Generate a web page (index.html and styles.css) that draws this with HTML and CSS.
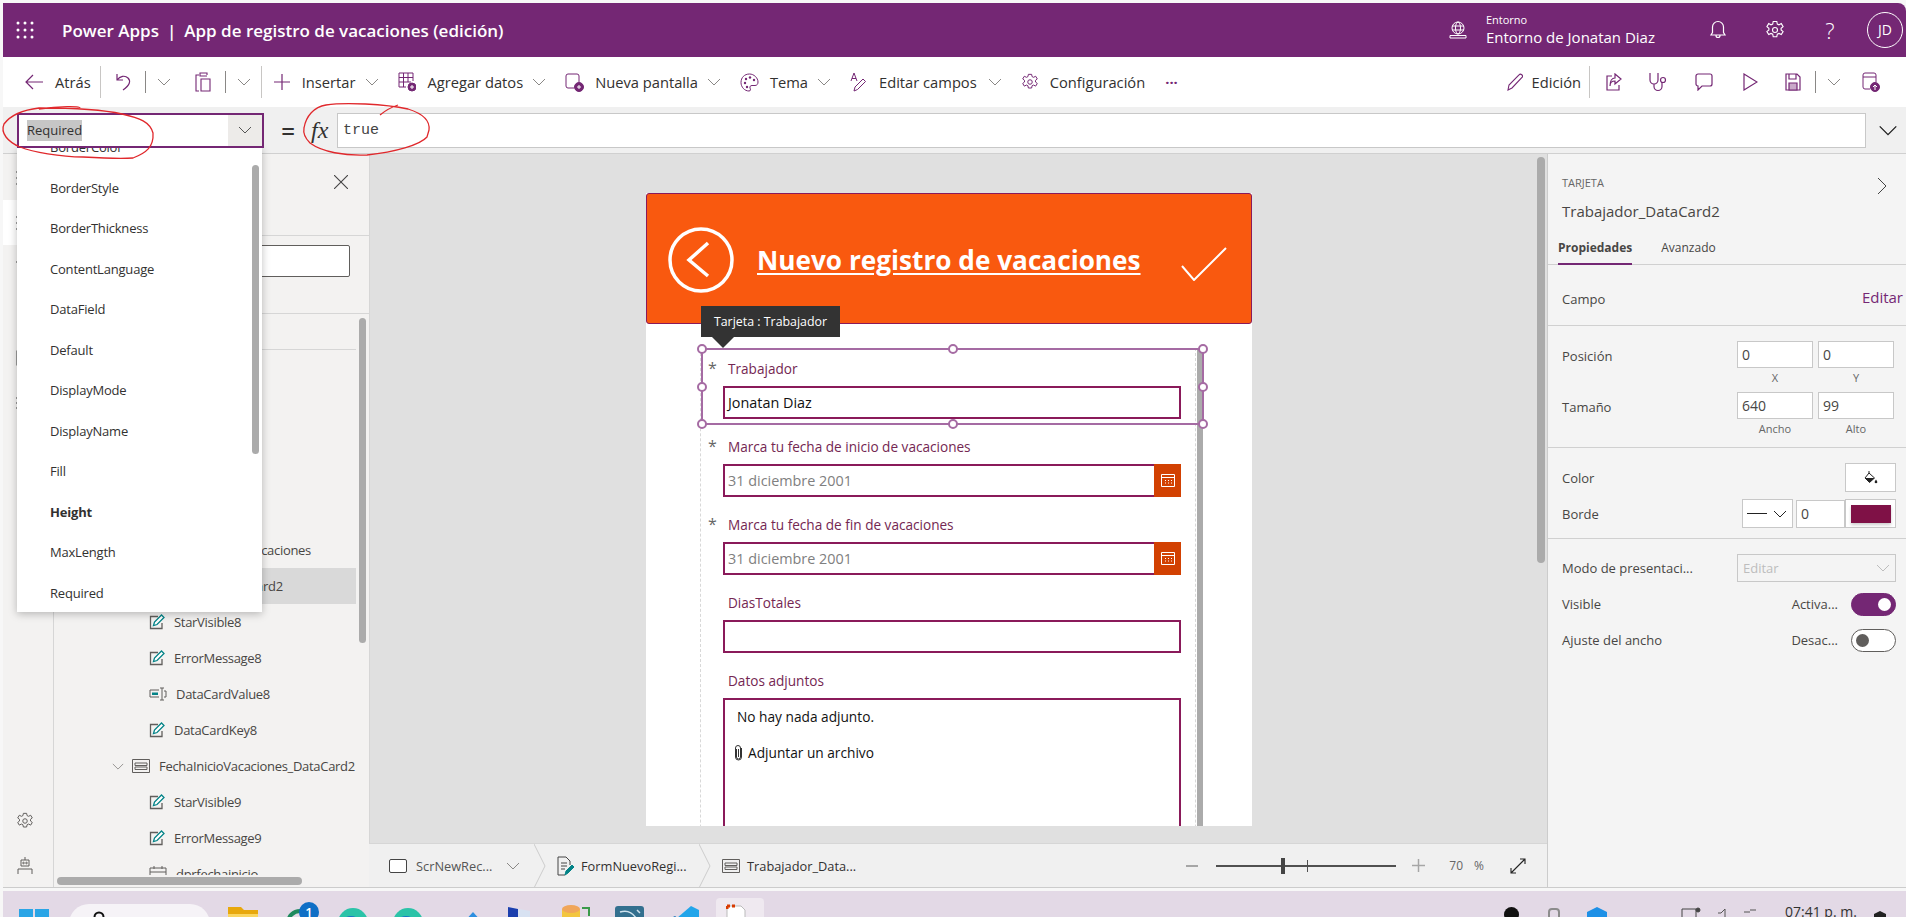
FILE: index.html
```html
<!DOCTYPE html>
<html lang="es">
<head>
    <meta charset="UTF-8">
    <title>Power Apps - App de registro de vacaciones</title>
    <link rel="stylesheet" href="styles.css">
</head>
<body>
    <!-- shared icons -->
    <svg class="defs" width="0" height="0">
        <symbol id="chev" viewBox="0 0 14 8"><path d="M1 1l6 6 6-6" fill="none" stroke="currentColor"/></symbol>
        <symbol id="edit" viewBox="0 0 16 16">
            <path d="M13 9v5.500H1.500V2.500H9" fill="none" stroke="#605e5c" stroke-width="1.300"/>
            <path d="M4.500 11.500l1-3.500 7-7 2.500 2.500-7 7z" fill="#fff" stroke="#038387" stroke-width="1.300"/>
        </symbol>
        <symbol id="card" viewBox="0 0 18 14">
            <path d="M.5.500h17v13H.5zM3 4h12v2.500H3zM3 8h12v2.500H3z" fill="none" stroke="#605e5c"/>
        </symbol>
        <symbol id="gear" viewBox="0 0 20 20">
            <path d="M8.200 1.500h3.600l.5 2.500 1.700.8 2.300-1.200 1.800 3-2 1.600v1.800l2 1.600-1.800 3-2.300-1.200-1.700.8-.5 2.500H8.200l-.5-2.500-1.700-.8-2.300 1.200-1.800-3 2-1.600V8.200l-2-1.600 1.800-3L6 4.800l1.700-.8z" fill="none" stroke="currentColor" stroke-width="1.100"/>
            <circle cx="10" cy="10" r="2.500" fill="none" stroke="currentColor" stroke-width="1.100"/>
        </symbol>
    </svg>

    <header class="topbar">
        <svg class="waffle" width="18" height="18" viewBox="0 0 18 18" fill="#fff">
            <circle cx="2" cy="2" r="1.500"/><circle cx="9" cy="2" r="1.500"/><circle cx="16" cy="2" r="1.500"/>
            <circle cx="2" cy="9" r="1.500"/><circle cx="9" cy="9" r="1.500"/><circle cx="16" cy="9" r="1.500"/>
            <circle cx="2" cy="16" r="1.500"/><circle cx="9" cy="16" r="1.500"/><circle cx="16" cy="16" r="1.500"/>
        </svg>
        <div class="app-title">Power Apps<span class="pipe">|</span>App de registro de vacaciones (edición)</div>
        <div class="env">
            <svg width="18" height="18" viewBox="0 0 18 18" fill="none" stroke="#fff">
                <circle cx="9" cy="7" r="6"/><ellipse cx="9" cy="7" rx="2.500" ry="6"/><path d="M3 5h12M3 9h12M1 14.500h16v2.500H1z"/>
            </svg>
            <div class="env-text">
                <div class="env-small">Entorno</div>
                <div class="env-name">Entorno de Jonatan Diaz</div>
            </div>
        </div>
        <svg class="top-icon bell" width="18" height="20" viewBox="0 0 18 20" fill="none" stroke="#fff" stroke-width="1.200"><path d="M2 15h14l-1.500-2.500V7a5.500 5.500 0 0 0-11 0v5.500zM7 15.500a2 2 0 0 0 4 0"/></svg>
        <svg class="top-icon cog" width="20" height="20" viewBox="0 0 20 20"><use href="#gear"/></svg>
        <div class="help">?</div>
        <div class="avatar">JD</div>
    </header>

    <nav class="toolbar">
        <div class="tool back">
            <svg width="18" height="16" viewBox="0 0 18 16" fill="none" stroke="#742774" stroke-width="1.200"><path d="M18 8H1M8 1L1 8l7 7"/></svg>
            <span>Atrás</span>
        </div>
        <i class="sep tall"></i>
        <svg class="undo" width="16" height="18" viewBox="0 0 16 18" fill="none" stroke="#742774" stroke-width="1.200"><path d="M1 1v6h6M1 7c3-4 8-5 11-2 3 3 2 7-5 12"/></svg>
        <i class="sep"></i>
        <svg class="chev solo" width="14" height="8"><use href="#chev"/></svg>
        <svg class="paste" width="16" height="20" viewBox="0 0 16 20" fill="none" stroke="#742774" stroke-width="1.100"><path d="M4 3H1v16h3M12 3V1H5v3h7M6 7h9v12H6z"/></svg>
        <i class="sep"></i>
        <svg class="chev solo" width="14" height="8"><use href="#chev"/></svg>
        <i class="sep tall"></i>
        <div class="tool plus">
            <svg width="16" height="16" viewBox="0 0 16 16" stroke="#742774" stroke-width="1.200"><path d="M8 0v16M0 8h16"/></svg>
            <span>Insertar</span>
            <svg class="chev" width="14" height="8"><use href="#chev"/></svg>
        </div>
        <div class="tool">
            <svg width="18" height="20" viewBox="0 0 18 20" fill="none" stroke="#742774"><path d="M8 15H1V1h14v8M1 5.500h14M1 10h12M5.500 1v14M10 1v9"/><circle cx="14" cy="15" r="4" fill="#742774"/><path d="M12 15h4M14 13v4" stroke="#fff"/></svg>
            <span>Agregar datos</span>
            <svg class="chev" width="14" height="8"><use href="#chev"/></svg>
        </div>
        <div class="tool">
            <svg width="19" height="19" viewBox="0 0 19 19" fill="none" stroke="#742774"><path d="M9 15H3a2 2 0 0 1-2-2V3a2 2 0 0 1 2-2h9a2 2 0 0 1 2 2v6"/><circle cx="14" cy="14" r="4.500" fill="#742774"/><path d="M12 14h4M14 12v4" stroke="#fff"/></svg>
            <span>Nueva pantalla</span>
            <svg class="chev" width="14" height="8"><use href="#chev"/></svg>
        </div>
        <div class="tool">
            <svg width="19" height="19" viewBox="0 0 19 19" fill="none" stroke="#742774"><path d="M9.500 1C4.500 1 1 4.500 1 9.500 1 14 4.500 18 9 18c2 0 1.500-2 1-3-.5-1.500.5-2.500 2-2.500h3c2 0 3-1.500 3-3.500 0-4-4-8-8.500-8z"/><g fill="#742774" stroke="none"><circle cx="6" cy="6" r="1.200"/><circle cx="10" cy="4.500" r="1.200"/><circle cx="14" cy="7" r="1.200"/><circle cx="5" cy="10" r="1.200"/><circle cx="7" cy="14" r="1.200"/></g></svg>
            <span>Tema</span>
            <svg class="chev" width="14" height="8"><use href="#chev"/></svg>
        </div>
        <div class="tool wide">
            <svg width="16" height="20" viewBox="0 0 16 20" fill="none" stroke="#742774"><path d="M1 9l3-8 3 8M2 6.500h4M4 19l1-4 8-8 2.500 2.500-8 8z"/></svg>
            <span>Editar campos</span>
            <svg class="chev" width="14" height="8"><use href="#chev"/></svg>
        </div>
        <div class="tool cfg">
            <svg width="18" height="18" viewBox="0 0 20 20"><use href="#gear"/></svg>
            <span>Configuración</span>
        </div>
        <div class="more">···</div>

        <div class="tool-right">
            <svg width="16" height="18" viewBox="0 0 16 18" fill="none" stroke="#742774" stroke-width="1.100"><path d="M1 17l1-5L12 2a1.800 1.800 0 0 1 3 2.500L5 15z"/></svg>
            <span class="mode">Edición</span>
            <i class="sep tall"></i>
            <svg class="r-share" width="16" height="18" viewBox="0 0 16 18" fill="none" stroke="#742774" stroke-width="1.200"><path d="M6 3H1v14h12v-5M9 1l6 5-6 5V8C6 8 4 10 4 13c0-5 2-8 5-8z"/></svg>
            <svg class="r-steth" width="19" height="20" viewBox="0 0 19 20" fill="none" stroke="#742774" stroke-width="1.200"><path d="M1 1v7a4 4 0 0 0 8 0V1M5 12v2.500a4 4 0 0 0 8 0V10"/><circle cx="14" cy="8" r="2.500"/></svg>
            <svg class="r-comment" width="18" height="18" viewBox="0 0 18 18" fill="none" stroke="#742774" stroke-width="1.200"><path d="M3 1h12a2 2 0 0 1 2 2v8a2 2 0 0 1-2 2H7l-4 4v-4a2 2 0 0 1-2-2V3a2 2 0 0 1 2-2z"/></svg>
            <svg class="r-play" width="15" height="18" viewBox="0 0 15 18" fill="none" stroke="#742774" stroke-width="1.200"><path d="M1 1l13 8-13 8z"/></svg>
            <svg class="r-save" width="16" height="18" viewBox="0 0 16 18" fill="none" stroke="#742774" stroke-width="1.200"><path d="M1 1h11l3 3v13H1zM4 1v5h7V1"/><path d="M4 10h8v7H4z" fill="#c9a9c9"/></svg>
            <i class="sep"></i>
            <svg class="chev solo" width="14" height="8"><use href="#chev"/></svg>
            <svg class="r-publish" width="18" height="20" viewBox="0 0 18 20" fill="none" stroke="#742774"><path d="M8 17H3a2 2 0 0 1-2-2V3a2 2 0 0 1 2-2h9a2 2 0 0 1 2 2v7M1 5h13"/><circle cx="13" cy="15" r="4.500" fill="#742774"/><path d="M13 18v-5M11 15l2-2 2 2" stroke="#fff"/></svg>
        </div>
    </nav>

    <div class="formula">
        <div class="prop-select">
            <div class="prop-value"><span class="picked">Required</span></div>
            <div class="prop-btn"><svg width="14" height="8"><use href="#chev"/></svg></div>
        </div>
        <ul class="prop-list">
            <li>BorderColor</li>
            <li>BorderStyle</li>
            <li>BorderThickness</li>
            <li>ContentLanguage</li>
            <li>DataField</li>
            <li>Default</li>
            <li>DisplayMode</li>
            <li>DisplayName</li>
            <li>Fill</li>
            <li class="on">Height</li>
            <li>MaxLength</li>
            <li>Required</li>
        </ul>
        <div class="equals">=</div>
        <div class="fx">fx</div>
        <div class="formula-input">true</div>
        <svg class="formula-chev" width="20" height="11" viewBox="0 0 14 8"><use href="#chev"/></svg>
    </div>

    <main class="main">
        <aside class="rail">
            <div class="rail-item"><svg width="18" height="14" stroke="#444"><path d="M0 1h18M0 7h18M0 13h18"/></svg></div>
            <div class="rail-item active"><svg width="18" height="14" stroke="#444"><path d="M0 1h18M0 7h18M0 13h18"/></svg></div>
            <div class="rail-item"><svg width="18" height="14" stroke="#444"><path d="M0 1h18M9 1v12"/></svg></div>
            <div class="rail-item"></div>
            <div class="rail-item"><svg width="18" height="16" fill="none" stroke="#444"><rect x="1" y="1" width="16" height="14"/></svg></div>
            <div class="rail-item"><svg width="18" height="14" stroke="#444" stroke-dasharray="2 3"><path d="M1 1v12"/></svg></div>
            <div class="rail-item"><svg width="18" height="16" fill="none" stroke="#444"><circle cx="9" cy="8" r="7"/></svg></div>
            <div class="rail-bottom">
                <svg width="18" height="18" viewBox="0 0 20 20"><use href="#gear"/></svg>
                <svg width="16" height="18" viewBox="0 0 16 18" fill="none" stroke="#605e5c"><path d="M8 0v3M4 3h8v6H4zM1 17v-5h14v5"/><circle cx="6.500" cy="6" r=".8"/><circle cx="9.500" cy="6" r=".8"/></svg>
            </div>
        </aside>

        <section class="tree">
            <div class="tree-head">
                <svg class="tree-close" width="14" height="14" stroke="#444" stroke-width="1.100"><path d="M0 0l14 14M14 0L0 14"/></svg>
            </div>
            <div class="tree-search"><div class="search-box"></div></div>
            <div class="tree-tabs"></div>
            <div class="tree-list">
                <div class="row lvl-1"><svg class="ico-card" width="18" height="14"><use href="#card"/></svg>FormNuevoRegistroVacaciones</div>
                <div class="row lvl-2 selected"><svg class="ico-card" width="18" height="14"><use href="#card"/></svg>Trabajador_DataCard2</div>
                <div class="row lvl-3"><svg width="16" height="16"><use href="#edit"/></svg>StarVisible8</div>
                <div class="row lvl-3"><svg width="16" height="16"><use href="#edit"/></svg>ErrorMessage8</div>
                <div class="row lvl-3"><svg width="18" height="14" viewBox="0 0 18 14" fill="none" stroke="#605e5c"><path d="M10 3H1v7h9"/><path d="M3 5.500h6v2.500H3z" fill="#038387" stroke="none"/><path d="M13 1v12M11 1h4M11 13h4M15 4h2v6h-2"/></svg>DataCardValue8</div>
                <div class="row lvl-3"><svg width="16" height="16"><use href="#edit"/></svg>DataCardKey8</div>
                <div class="row lvl-2"><svg class="tree-chev" width="12" height="7" viewBox="0 0 14 8"><use href="#chev"/></svg><svg class="ico-card" width="18" height="14"><use href="#card"/></svg>FechaInicioVacaciones_DataCard2</div>
                <div class="row lvl-3"><svg width="16" height="16"><use href="#edit"/></svg>StarVisible9</div>
                <div class="row lvl-3"><svg width="16" height="16"><use href="#edit"/></svg>ErrorMessage9</div>
                <div class="row lvl-3"><svg width="18" height="16" viewBox="0 0 18 16" fill="none" stroke="#605e5c"><path d="M1 2h16v13H1zM1 6h16M5 0v3M13 0v3"/></svg>dprfechainicio</div>
            </div>
            <i class="tree-vbar"></i>
            <i class="tree-hbar"></i>
        </section>

        <div class="work">
            <div class="canvas">
                <div class="screen">
                    <div class="banner">
                        <svg class="back-circle" width="66" height="66" viewBox="0 0 66 66" fill="none" stroke="#fff"><circle cx="33" cy="33" r="31" stroke-width="3.500"/><path d="M40 16L21 33l19 16" stroke-width="3.500"/></svg>
                        <div class="banner-title">Nuevo registro de vacaciones</div>
                        <svg class="check" width="46" height="34" viewBox="0 0 46 34" fill="none" stroke="#fff" stroke-width="2"><path d="M1 19l12 14L45 1"/></svg>
                    </div>
                    <div class="form">
                        <div class="field">
                            <span class="star">*</span>
                            <label>Trabajador</label>
                            <div class="input dark">Jonatan Diaz</div>
                        </div>
                        <div class="field">
                            <span class="star">*</span>
                            <label>Marca tu fecha de inicio de vacaciones</label>
                            <div class="input date">31 diciembre 2001
                                <div class="date-btn"><svg width="14" height="13" viewBox="0 0 14 13" fill="none" stroke="#fff"><path d="M.5.500h13v12H.5zM.5 3.500h13"/><path d="M4 6.500h1M7 6.500h1M10 6.500h1M4 9h1M7 9h1M10 9h1" stroke-width="1.200"/></svg></div>
                            </div>
                        </div>
                        <div class="field">
                            <span class="star">*</span>
                            <label>Marca tu fecha de fin de vacaciones</label>
                            <div class="input date">31 diciembre 2001
                                <div class="date-btn"><svg width="14" height="13" viewBox="0 0 14 13" fill="none" stroke="#fff"><path d="M.5.500h13v12H.5zM.5 3.500h13"/><path d="M4 6.500h1M7 6.500h1M10 6.500h1M4 9h1M7 9h1M10 9h1" stroke-width="1.200"/></svg></div>
                            </div>
                        </div>
                        <div class="field">
                            <label>DiasTotales</label>
                            <div class="input"></div>
                        </div>
                        <div class="field">
                            <label>Datos adjuntos</label>
                            <div class="attach">
                                <div class="attach-none">No hay nada adjunto.</div>
                                <div class="attach-add">
                                    <svg width="9" height="16" viewBox="0 0 9 16" fill="none" stroke="#333"><path d="M2.500 4v8a2 2 0 0 0 4 0V3a2.500 2.500 0 0 0-5 0M7.500 3v9a3 3 0 0 1-6 0V3M4.500 4v8"/></svg>
                                    Adjuntar un archivo
                                </div>
                            </div>
                        </div>
                        <i class="form-bar"></i>
                        <!-- selected card -->
                        <div class="sel-tip">Tarjeta : Trabajador</div>
                        <div class="sel-box">
                            <i class="h tl"></i><i class="h tc"></i><i class="h tr"></i>
                            <i class="h ml"></i><i class="h mr"></i>
                            <i class="h bl"></i><i class="h bc"></i><i class="h br"></i>
                        </div>
                    </div>
                </div>
                <i class="canvas-bar"></i>
            </div>
            <footer class="status">
                <svg class="crumb-ico" width="18" height="16" fill="#fff" stroke="#444"><rect x=".5" y="1.500" width="17" height="13" rx="1.500"/></svg>
                <span class="crumb c1">ScrNewRec...</span>
                <svg class="chev c-chev" width="14" height="8"><use href="#chev"/></svg>
                <svg class="crumb-sep" width="12" height="44" fill="none" stroke="#ccc"><path d="M0 0l11 22L0 44"/></svg>
                <svg class="crumb-ico form-ico" width="17" height="20" viewBox="0 0 17 20" fill="none" stroke="#444"><path d="M8 19H1V1h8l4 4v4M4 7h6M4 10h6M4 13h4"/><path d="M8 19l1-4 6-6 2 2-6 6z" fill="#038387" stroke="#038387"/></svg>
                <span class="crumb c2">FormNuevoRegi...</span>
                <svg class="crumb-sep" width="12" height="44" fill="none" stroke="#ccc"><path d="M0 0l11 22L0 44"/></svg>
                <svg class="crumb-ico card-ico" width="18" height="14"><use href="#card"/></svg>
                <span class="crumb">Trabajador_Data...</span>
                <div class="zoom">
                    <span class="z-minus"></span>
                    <div class="z-track"><i class="z-tick"></i><i class="z-thumb"></i></div>
                    <svg class="z-plus" width="13" height="13" stroke="#a6a6a6" stroke-width="1.500"><path d="M6.500 0v13M0 6.500h13"/></svg>
                    <span class="z-val">70</span><span class="z-pct">%</span>
                    <svg class="z-expand" width="16" height="16" fill="none" stroke="#222" stroke-width="1.100"><path d="M1 15L15 1M10 1h5v5M1 10v5h5"/></svg>
                </div>
            </footer>
        </div>

        <aside class="panel">
            <div class="p-head">
                <div class="p-kind">TARJETA</div>
                <svg class="p-close" width="10" height="18" fill="none" stroke="#444"><path d="M1 1l8 8-8 8"/></svg>
                <div class="p-name">Trabajador_DataCard2</div>
                <div class="p-tabs"><span class="p-tab on">Propiedades</span><span class="p-tab">Avanzado</span></div>
            </div>
            <div class="p-sec p-campo"><span>Campo</span><a class="p-link">Editar</a></div>
            <div class="p-sec p-geom">
                <div class="geom-row">
                    <span class="geom-label">Posición</span>
                    <div class="num"><div class="box">0</div><small>X</small></div>
                    <div class="num"><div class="box">0</div><small>Y</small></div>
                </div>
                <div class="geom-row">
                    <span class="geom-label">Tamaño</span>
                    <div class="num"><div class="box">640</div><small>Ancho</small></div>
                    <div class="num"><div class="box">99</div><small>Alto</small></div>
                </div>
            </div>
            <div class="p-sec p-style">
                <div class="style-row">
                    <span>Color</span>
                    <div class="color-btn"><svg width="14" height="15" viewBox="0 0 14 15"><path d="M5 1v2.500M5 3L1 8l4.500 4.500L10.500 8z" fill="none" stroke="#222"/><path d="M1 8h9.500l-5 4.500z" fill="#222"/><path d="M12 9.500c1 1.500 1.500 2.200 1.300 3-.3 1-2.300 1-2.600 0-.2-.8.300-1.500 1.300-3z" fill="#222"/></svg></div>
                </div>
                <div class="style-row">
                    <span>Borde</span>
                    <div class="border-ctl">
                        <div class="line-pick"><i></i><svg width="14" height="8"><use href="#chev"/></svg></div>
                        <div class="border-num">0</div>
                        <div class="color-btn swatch"><i></i></div>
                    </div>
                </div>
            </div>
            <div class="p-sec p-misc">
                <div class="misc-row mode-row">
                    <span>Modo de presentaci...</span>
                    <div class="mode-select">Editar<svg width="14" height="8"><use href="#chev"/></svg></div>
                </div>
                <div class="misc-row toggle-row">
                    <span>Visible</span>
                    <div class="toggle-wrap"><span>Activa...</span><i class="toggle on"></i></div>
                </div>
                <div class="misc-row toggle-row">
                    <span>Ajuste del ancho</span>
                    <div class="toggle-wrap"><span>Desac...</span><i class="toggle"></i></div>
                </div>
            </div>
        </aside>
    </main>

    <footer class="taskbar">
        <svg class="tb win" width="30" height="30" viewBox="0 0 30 30" fill="#2aa5e6"><path d="M0 0h14v14H0zM16 0h14v14H16zM0 16h14v14H0zM16 16h14v14H16z"/></svg>
        <div class="tb pill"><svg width="14" height="14" fill="none" stroke="#111" stroke-width="2"><circle cx="6" cy="6" r="4.500"/></svg></div>
        <svg class="tb folder" width="30" height="26" viewBox="0 0 30 26"><path d="M0 0h13l3 3h14v23H0z" fill="#e8a80c"/><path d="M0 7h30v19H0z" fill="#fbd660"/></svg>
        <div class="tb chat"><svg width="30" height="30" fill="none" stroke="#1e8a5e" stroke-width="4"><circle cx="15" cy="15" r="12"/></svg><b>1</b></div>
        <svg class="tb edge" width="30" height="30" viewBox="0 0 30 30"><circle cx="15" cy="15" r="15" fill="#2bc3a8"/><circle cx="13" cy="19" r="11" fill="#1a73c9"/></svg>
        <svg class="tb edge2" width="30" height="30" viewBox="0 0 30 30"><circle cx="15" cy="15" r="15" fill="#2bc3a8"/><circle cx="13" cy="19" r="11" fill="#1a73c9"/></svg>
        <svg class="tb dart" width="18" height="20" viewBox="0 0 18 20" fill="#2d8fe0"><path d="M9 4l9 10H0z"/></svg>
        <svg class="tb flag" width="24" height="24" viewBox="0 0 24 24"><path d="M1 0l22 4v20H1z" fill="#d8e2f2"/><path d="M1 0l10 2v20H1z" fill="#1b3fae"/></svg>
        <svg class="tb db" width="28" height="24" viewBox="0 0 28 24"><path d="M20 3h7v8" fill="none" stroke="#3a9a4a" stroke-width="2"/><path d="M0 4h18v20H0z" fill="#f3c63f"/><ellipse cx="9" cy="4" rx="9" ry="4" fill="#f0a65a"/></svg>
        <svg class="tb sql" width="29" height="24" viewBox="0 0 29 24"><rect width="29" height="24" rx="3" fill="#33708f"/><path d="M5 6c6-2 12 0 16 6M22 4l3 3" fill="none" stroke="#cfe3ee" stroke-width="1.500"/></svg>
        <svg class="tb code" width="28" height="24" viewBox="0 0 28 24"><path d="M20 0l8 4v20h-8L6 12z" fill="#22a5ea"/><path d="M0 12l4-2 4 3-4 3z" fill="#0d6fb8"/></svg>
        <div class="tb active-tile"><svg width="20" height="20" viewBox="0 0 20 20"><path d="M1 2h14l4 4v14H1z" fill="#fff" stroke="#bbb"/><path d="M1 2h3M6 2h3M1 2v3" stroke="#d83b01" stroke-width="3"/></svg></div>
        <svg class="tb t-dot" width="15" height="15"><circle cx="7.500" cy="7.500" r="7.500" fill="#111"/></svg>
        <svg class="tb t-cloud" width="14" height="15" fill="none" stroke="#8c8c8c" stroke-width="2"><rect x="2" y="2" width="10" height="13" rx="3"/></svg>
        <svg class="tb t-box" width="20" height="15"><path d="M10 0l10 5v10H0V5z" fill="#1e90e6"/></svg>
        <svg class="tb t-net" width="20" height="15" fill="none" stroke="#444"><path d="M1 2h14v13H1z"/><circle cx="17" cy="3" r="2" fill="#444"/></svg>
        <svg class="tb t-vol" width="13" height="15" stroke="#555" fill="none"><path d="M1 6h3l4-4v13"/></svg>
        <svg class="tb t-bat" width="12" height="15" stroke="#555"><path d="M0 4h6M6 2h6"/></svg>
        <div class="clock">07:41 p. m.</div>
        <svg class="tb t-bell" width="15" height="15" fill="#222"><path d="M2 6l6-3 6 3v9H2z"/></svg>
    </footer>

    <!-- hand drawn marks on top of the screenshot -->
    <svg class="marks" width="1906" height="917" viewBox="0 0 1906 917" fill="none" stroke="#e0282c" stroke-width="1.300">
        <path d="M39 109C60 106 80 106 80 108M39 108C22 110 10 116 4 124C0 133 8 142 20 147C33 152 60 157 83 157C100 158 120 159 133 158C146 153 154 147 153 133C150 122 140 118 122 114C100 109 70 108 39 108z"/>
        <path d="M304 128C306 116 314 107 326 105C345 102 385 104 408 109C424 114 430 122 429 130L427 137C420 145 395 152 367 155C345 156 322 152 310 143C305 138 303 133 304 128zM380 115C386 110 392 107 398 105"/>
    </svg>
</body>
</html>
```

FILE: styles.css
```css
* {
    box-sizing: border-box;
}

html,
body {
    margin: 0;
    padding: 0;
    height: 917px;
    overflow: hidden;
}

body {
    position: relative;
    padding: 3px 0 0 3px;
    font-family: "Open Sans", "Noto Sans", sans-serif;
    font-size: 14px;
    color: #323130;
    background-color: #f7f7f7;
}

.defs {
    position: absolute;
}

svg {
    display: block;
    flex: none;
}

ul {
    list-style: none;
    margin: 0;
    padding: 0;
}

i {
    display: block;
    font-style: normal;
}

/* top purple bar */
.topbar {
    display: flex;
    align-items: center;
    height: 54px;
    padding-left: 13px;
    color: #fff;
    background-color: #742774;
    border-radius: 0 8px 0 0;
}

.app-title {
    margin-left: 28px;
    font-size: 17px;
    font-weight: 600;
}

.pipe {
    margin: 0 8px;
}

.env {
    display: flex;
    align-items: center;
    margin-left: auto;
    gap: 19px;
}

.env-small {
    font-size: 11px;
    line-height: 14px;
}

.env-name {
    font-size: 15px;
    line-height: 21px;
}

.bell {
    margin-left: 54px;
}

.cog {
    margin-left: 38px;
    color: #fff;
}

.help {
    width: 20px;
    margin-left: 35px;
    font-size: 22px;
    font-weight: 300;
    text-align: center;
}

.avatar {
    width: 36px;
    height: 36px;
    margin: 0 3px 0 27px;
    border: 1px solid #fff;
    border-radius: 50%;
    font-size: 14px;
    line-height: 34px;
    text-align: center;
}

/* command bar */
.toolbar {
    display: flex;
    align-items: center;
    height: 50px;
    padding-left: 22px;
    font-size: 14.7px;
    background-color: #fff;
}

.tool {
    display: flex;
    align-items: center;
    gap: 11px;
    margin-right: 19px;
    white-space: nowrap;
}

.tool .chev {
    margin-left: -2px;
}

.chev {
    color: #8a8886;
}

.solo {
    margin: 0 10px 0 11px;
}

.sep {
    flex: none;
    width: 1px;
    height: 22px;
    background-color: #8a8886;
}

.sep.tall {
    height: 32px;
    background-color: #c8c6c4;
}

.back {
    gap: 12px;
    margin-right: 9px;
}

.undo {
    margin: 0 13px 0 15px;
}

.paste {
    margin: 0 14px 0 14px;
}

.plus {
    gap: 12px;
    margin-left: 12px;
}

.wide {
    gap: 13px;
}

.cfg {
    margin-right: 20px;
}

.cfg svg {
    color: #742774;
}

.more {
    font-weight: 700;
    color: #742774;
}

.tool-right {
    display: flex;
    align-items: center;
    margin-left: auto;
    padding-right: 26px;
}

.mode {
    margin: 0 8px 0 9px;
}

.r-share {
    margin-left: 16px;
}

.r-steth {
    margin-left: 27px;
}

.r-comment {
    margin-left: 27px;
}

.r-play {
    margin-left: 30px;
}

.r-save {
    margin: 0 14px 0 27px;
}

.r-publish {
    margin-left: 11px;
}

/* formula bar */
.formula {
    position: relative;
    display: flex;
    align-items: center;
    height: 47px;
    padding-left: 14px;
    background-color: #f0f0f0;
    border-bottom: 1px solid #d0d0d0;
}

.prop-select {
    position: relative;
    z-index: 3;
    display: flex;
    width: 247px;
    height: 35px;
    background-color: #fff;
    border: 2px solid #742774;
}

.prop-value {
    flex: 1;
    padding: 5px 0 0 8px;
    font-size: 13px;
}

.picked {
    display: inline-block;
    height: 21px;
    line-height: 21px;
    background-color: #c6c6c6;
}

.prop-btn {
    display: flex;
    align-items: center;
    justify-content: center;
    width: 34px;
    color: #555;
    background-color: #edebe9;
}

.prop-list {
    position: absolute;
    z-index: 2;
    top: 40px;
    left: 14px;
    width: 245px;
    height: 465px;
    overflow: hidden;
    font-size: 13px;
    letter-spacing: -0.2px;
    background-color: #fff;
    box-shadow: 0 2px 8px rgba(0, 0, 0, 0.25);
}

.prop-list::after {
    content: "";
    position: absolute;
    top: 18px;
    left: 235px;
    width: 7px;
    height: 289px;
    background-color: #ababab;
    border-radius: 4px;
}

.prop-list li {
    height: 40.5px;
    padding-left: 33px;
    line-height: 40.5px;
    white-space: nowrap;
}

.prop-list li:first-child {
    margin-top: -20px;
}

.prop-list .on {
    font-weight: 700;
}

.equals {
    width: 22px;
    margin-left: 13px;
    font-size: 24px;
    font-weight: 600;
    text-align: center;
}

.fx {
    width: 20px;
    margin-left: 12px;
    font-family: "Liberation Serif", serif;
    font-size: 24px;
    font-style: italic;
}

.formula-input {
    flex: none;
    width: 1529px;
    height: 35px;
    margin-left: 6px;
    padding-left: 5px;
    font-family: "Liberation Mono", monospace;
    font-size: 15px;
    line-height: 33px;
    color: #444;
    background-color: #fff;
    border: 1px solid #c8c8c8;
}

.formula-chev {
    margin-left: 12px;
    color: #222;
}

/* body of the studio */
.main {
    display: flex;
    height: 734px;
    border-bottom: 1px solid #ccc;
}

.rail {
    display: flex;
    flex-direction: column;
    width: 51px;
    padding: 1px 7px 0 0;
    background-color: #f3f2f1;
    border-right: 1px solid #d6d6d6;
}

.rail-item {
    display: flex;
    align-items: center;
    justify-content: center;
    height: 45px;
}

.rail-item.active {
    margin-right: -6px;
    padding-right: 6px;
    background-color: #fff;
}

.rail-bottom {
    display: flex;
    flex-direction: column;
    align-items: center;
    gap: 27px;
    margin-top: auto;
    padding-bottom: 12px;
    color: #605e5c;
}

.tree {
    position: relative;
    display: flex;
    flex-direction: column;
    width: 315px;
    background-color: #f3f2f1;
}

.tree-head {
    position: relative;
    height: 82px;
    border-bottom: 1px solid #d6d6d6;
}

.tree-close {
    position: absolute;
    top: 21px;
    left: 280px;
}

.tree-search {
    height: 78px;
    padding: 9px 0 0 10px;
    border-bottom: 1px solid #d6d6d6;
}

.search-box {
    width: 286px;
    height: 32px;
    background-color: #fff;
    border: 1px solid #605e5c;
    border-radius: 2px;
}

.tree-tabs {
    width: 302px;
    height: 36px;
    border-bottom: 1px solid #d6d6d6;
}

.tree-list {
    width: 302px;
    height: 525px;
    padding-top: 182px;
    overflow: hidden;
}

.row {
    display: flex;
    align-items: center;
    gap: 9px;
    height: 36px;
    font-size: 13px;
    letter-spacing: -0.3px;
    color: #484644;
    white-space: nowrap;
}

.row.selected {
    background-color: #d9d9d9;
}

.lvl-1 {
    padding-left: 50px;
}

.lvl-2 {
    padding-left: 71px;
}

.lvl-3 {
    padding-left: 95px;
}

.lvl-2 .tree-chev {
    margin-left: -13px;
    margin-right: -1px;
    color: #8a8886;
}

.tree-vbar {
    position: absolute;
    top: 164px;
    left: 305px;
    width: 7px;
    height: 325px;
    background-color: #ababab;
    border-radius: 4px;
}

.tree-hbar {
    position: absolute;
    bottom: 2px;
    left: 3px;
    width: 245px;
    height: 8px;
    background-color: #ababab;
    border-radius: 4px;
}

/* canvas */
.work {
    display: flex;
    flex-direction: column;
    width: 1178px;
}

.canvas {
    position: relative;
    height: 690px;
    padding: 39px 0 0 276px;
    background-color: #e0e0e0;
    border-left: 1px solid #d6d6d6;
}

.canvas-bar {
    position: absolute;
    top: 3px;
    right: 2px;
    width: 8px;
    height: 406px;
    background-color: #ababab;
    border-radius: 4px;
}

.screen {
    width: 606px;
    height: 633px;
    overflow: hidden;
    background-color: #fff;
}

.banner {
    display: flex;
    align-items: center;
    height: 131px;
    padding: 2px 0 0 21px;
    background-color: #f9590f;
    border: 1px solid #8a1a5a;
    border-radius: 3px;
}

.banner-title {
    margin-left: 23px;
    font-size: 26.2px;
    font-weight: 700;
    color: #fff;
    text-decoration: underline;
    text-decoration-thickness: 2px;
    text-underline-offset: 3px;
    white-space: nowrap;
}

.check {
    margin-left: 40px;
    margin-top: 9px;
}

.form {
    position: relative;
    width: 496px;
    height: 600px;
    margin: 24px 0 0 54px;
    border-left: 1px dashed #d8d8d8;
    border-right: 1px dashed #d8d8d8;
}

.field {
    position: relative;
    height: 78px;
    padding: 11px 0 0 22px;
}

.field label {
    display: block;
    height: 20px;
    padding-left: 5px;
    font-size: 13.6px;
    line-height: 20px;
    color: #742752;
}

.star {
    position: absolute;
    top: 9px;
    left: 7px;
    font-size: 16px;
    color: #666;
}

.input {
    display: flex;
    align-items: center;
    width: 458px;
    height: 33px;
    margin-top: 7px;
    padding-left: 3px;
    font-size: 14.4px;
    color: #111;
    border: 2px solid #8a1a5a;
}

.date {
    justify-content: space-between;
    color: #808080;
}

.date-btn {
    display: flex;
    align-items: center;
    justify-content: center;
    width: 27px;
    height: 33px;
    margin-right: -2px;
    background-color: #d24102;
}

.attach {
    width: 458px;
    height: 180px;
    margin-top: 7px;
    padding-top: 7px;
    font-size: 13.7px;
    color: #111;
    border: 2px solid #8a1a5a;
}

.attach-none {
    margin-left: 12px;
    line-height: 20px;
}

.attach-add {
    display: flex;
    align-items: center;
    gap: 5px;
    margin: 16px 0 0 9px;
    line-height: 20px;
}

.form-bar {
    position: absolute;
    top: 2px;
    left: 496px;
    width: 6px;
    height: 600px;
    background-color: #ababab;
}

.sel-tip {
    position: absolute;
    top: -42px;
    left: 0;
    width: 139px;
    height: 31px;
    font-size: 12.4px;
    line-height: 31px;
    text-align: center;
    color: #fff;
    background-color: #333;
}

.sel-tip::after {
    content: "";
    position: absolute;
    top: 31px;
    left: 11px;
    border-top: 11px solid #333;
    border-left: 11px solid transparent;
    border-right: 11px solid transparent;
}

.sel-box {
    position: absolute;
    top: 0;
    left: 0;
    width: 503px;
    height: 77px;
    border: 2px solid #a56ba3;
}

.h {
    position: absolute;
    width: 10px;
    height: 10px;
    background-color: #fff;
    border: 2px solid #a56ba3;
    border-radius: 50%;
}

.tl { top: -6px; left: -6px; }
.tc { top: -6px; left: 245px; }
.tr { top: -6px; right: -6px; }
.ml { top: 32px; left: -6px; }
.mr { top: 32px; right: -6px; }
.bl { bottom: -6px; left: -6px; }
.bc { bottom: -6px; left: 245px; }
.br { bottom: -6px; right: -6px; }

/* breadcrumb and zoom */
.status {
    display: flex;
    align-items: center;
    height: 44px;
    padding-left: 20px;
    background-color: #f0f0f0;
    border-top: 1px solid #d6d6d6;
}

.crumb {
    font-size: 12.8px;
    white-space: nowrap;
    color: #323130;
}

.crumb-ico {
    margin-right: 8px;
}

.c1 {
    width: 76px;
    margin-left: 1px;
    color: #555;
}

.c-chev {
    margin: 0 14px;
}

.crumb-sep {
    margin-right: 11px;
}

.c2 {
    width: 118px;
}

.card-ico {
    margin-right: 7px;
}

.form-ico {
    margin-right: 7px;
}

.zoom {
    display: flex;
    align-items: center;
    margin-left: auto;
    padding-right: 21px;
}

.z-minus {
    width: 12px;
    height: 2px;
    background-color: #a6a6a6;
}

.z-track {
    position: relative;
    width: 180px;
    height: 2px;
    margin: 0 16px 0 18px;
    background-color: #505050;
}

.z-tick {
    position: absolute;
    top: -5px;
    left: 91px;
    width: 1px;
    height: 12px;
    background-color: #505050;
}

.z-thumb {
    position: absolute;
    top: -7px;
    left: 65px;
    width: 4px;
    height: 16px;
    background-color: #444;
}

.z-val {
    margin-left: 24px;
    font-size: 12px;
    color: #666;
}

.z-pct {
    margin-left: 11px;
    font-size: 12px;
    color: #666;
}

.z-expand {
    margin-left: 26px;
}

/* properties panel */
.panel {
    width: 359px;
    font-size: 13px;
    color: #484644;
    background-color: #f4f4f4;
    border-left: 1px solid #ccc;
}

.p-head {
    position: relative;
    height: 111px;
    padding: 22px 0 0 14px;
    border-bottom: 1px solid #d0d0d0;
}

.p-kind {
    font-size: 11px;
    line-height: 14px;
    color: #666;
}

.p-close {
    position: absolute;
    top: 23px;
    left: 329px;
}

.p-name {
    margin-top: 11px;
    font-size: 15px;
    line-height: 20px;
}

.p-tabs {
    display: flex;
    gap: 29px;
    margin: 18px 0 0 -4px;
}

.p-tab {
    height: 26px;
    font-size: 12px;
    line-height: 17px;
}

.p-tab.on {
    font-weight: 700;
    border-bottom: 2px solid #742774;
}

.p-sec {
    padding: 0 10px 0 14px;
    border-bottom: 1px solid #d0d0d0;
}

.p-campo {
    display: flex;
    align-items: center;
    justify-content: space-between;
    height: 61px;
    padding-top: 8px;
    padding-right: 3px;
}

.p-link {
    margin-top: -4px;
    font-size: 15px;
    color: #742774;
}

.p-geom {
    height: 122px;
    padding-top: 15px;
    padding-right: 0;
}

.geom-row {
    display: flex;
    height: 51px;
}

.geom-label {
    flex: none;
    width: 175px;
    line-height: 30px;
}

.num {
    flex: none;
    width: 76px;
    margin-right: 5px;
    text-align: center;
}

.box {
    width: 76px;
    height: 27px;
    padding-left: 4px;
    font-size: 14px;
    line-height: 25px;
    text-align: left;
    background-color: #fff;
    border: 1px solid #c8c8c8;
}

.num small {
    display: block;
    margin-top: 2px;
    font-size: 11px;
    line-height: 15px;
    color: #666;
}

.p-style {
    height: 91px;
    padding-top: 15px;
}

.style-row {
    display: flex;
    align-items: center;
    justify-content: space-between;
    height: 29px;
    margin-bottom: 7px;
}

.color-btn {
    display: flex;
    align-items: center;
    justify-content: center;
    width: 51px;
    height: 29px;
    background-color: #fff;
    border: 1px solid #c8c8c8;
}

.border-ctl {
    display: flex;
    align-items: center;
    gap: 3px;
}

.line-pick {
    display: flex;
    align-items: center;
    justify-content: space-between;
    width: 51px;
    height: 29px;
    padding: 0 5px 0 4px;
    color: #222;
    background-color: #fff;
    border: 1px solid #c8c8c8;
}

.line-pick i {
    width: 20px;
    height: 1px;
    background-color: #222;
}

.border-num {
    width: 49px;
    height: 28px;
    margin-right: -3px;
    padding-left: 4px;
    font-size: 14px;
    line-height: 26px;
    background-color: #fff;
    border: 1px solid #c8c8c8;
}

.swatch i {
    width: 40px;
    height: 18px;
    background-color: #7f1146;
    box-shadow: 0 2px 3px rgba(0, 0, 0, 0.2);
}

.p-misc {
    padding-top: 15px;
    border-bottom: 0;
}

.misc-row {
    display: flex;
    align-items: center;
    justify-content: space-between;
}

.mode-row {
    margin-bottom: 4px;
}

.mode-select {
    display: flex;
    align-items: center;
    justify-content: space-between;
    width: 159px;
    height: 28px;
    padding: 0 5px;
    color: #bdbdbd;
    border: 1px solid #c8c8c8;
}

.toggle-row {
    height: 36px;
}

.toggle-wrap {
    display: flex;
    align-items: center;
    gap: 13px;
}

.toggle {
    position: relative;
    width: 45px;
    height: 23px;
    background-color: #fff;
    border: 1px solid #605e5c;
    border-radius: 12px;
}

.toggle::after {
    content: "";
    position: absolute;
    top: 4px;
    left: 4px;
    width: 13px;
    height: 13px;
    background-color: #605e5c;
    border-radius: 50%;
}

.toggle.on {
    background-color: #742774;
    border-color: #742774;
}

.toggle.on::after {
    left: 26px;
    background-color: #fff;
}

/* windows taskbar, cut by the bottom of the window */
.taskbar {
    position: absolute;
    left: 3px;
    right: 0;
    top: 891px;
    display: flex;
    height: 26px;
    overflow: hidden;
    background-color: #e3d9e6;
}

.tb {
    position: relative;
    flex: none;
}

.win {
    margin: 18px 0 0 16px;
}

.pill {
    width: 141px;
    height: 40px;
    margin: 13px 0 0 20px;
    padding: 7px 0 0 24px;
    background-color: #f6f3f7;
    border-radius: 20px;
}

.folder {
    margin: 16px 0 0 18px;
}

.chat {
    width: 30px;
    margin: 17px 0 0 27px;
}

.chat b {
    position: absolute;
    top: -6px;
    left: 14px;
    width: 20px;
    height: 20px;
    font-size: 13px;
    font-weight: 600;
    line-height: 20px;
    text-align: center;
    color: #fff;
    background-color: #0f6fc6;
    border-radius: 50%;
}

.edge {
    margin: 17px 0 0 23px;
}

.edge2 {
    margin: 17px 0 0 25px;
}

.dart {
    margin: 17px 0 0 41px;
}

.flag {
    margin: 16px 0 0 25px;
}

.db {
    margin: 14px 0 0 31px;
}

.sql {
    margin: 15px 0 0 25px;
}

.code {
    margin: 15px 0 0 27px;
}

.active-tile {
    width: 48px;
    height: 40px;
    margin: 7px 0 0 17px;
    padding: 6px 0 0 10px;
    background-color: #efe9f0;
    border-radius: 4px;
}

.t-dot {
    margin: 16px 0 0 740px;
}

.t-cloud {
    margin: 16px 0 0 28px;
}

.t-box {
    margin: 16px 0 0 26px;
}

.t-net {
    margin: 16px 0 0 74px;
}

.t-vol {
    margin: 16px 0 0 16px;
}

.t-bat {
    margin: 17px 0 0 14px;
}

.clock {
    flex: none;
    margin: 12px 0 0 29px;
    font-size: 14px;
    line-height: 18px;
    white-space: nowrap;
}

.t-bell {
    margin: 17px 0 0 15px;
}

/* red rings */
.marks {
    position: absolute;
    z-index: 5;
    top: 0;
    left: 0;
    pointer-events: none;
}
```
